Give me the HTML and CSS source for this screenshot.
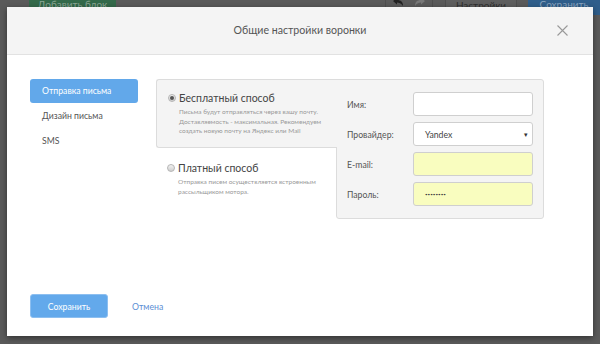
FILE: index.html
```html
<!doctype html>
<html lang="ru">
  <head>
    <meta charset="UTF-8" />
    <meta name="viewport" content="width=device-width, initial-scale=1.0" />
    <title>Общие настройки воронки</title>
    <link rel="stylesheet" href="styles.css">
  </head>
  <body>
    <div class="page-bar">
      <span class="bar-btn bar-add">Добавить блок</span>
      <span class="bar-spacer"></span>
      <span class="bar-history">
        <svg class="bar-undo" width="12" height="10" viewBox="0 0 12 10">
          <path d="M1 4 L5 1 L5 3 C9 3 11 5 11 9 C9 6 7 5.5 5 5.5 L5 7.5 Z" fill="#222" />
        </svg>
        <svg class="bar-redo" width="12" height="10" viewBox="0 0 12 10">
          <path d="M11 4 L7 1 L7 3 C3 3 1 5 1 9 C3 6 5 5.5 7 5.5 L7 7.5 Z" fill="#777" />
        </svg>
      </span>
      <span class="bar-btn bar-settings">Настройки</span>
      <span class="bar-btn bar-save">Сохранить</span>
    </div>

    <div class="modal">
      <div class="modal-header">
        <span></span>
        <h2 class="modal-title">Общие настройки воронки</h2>
        <span class="modal-close">
          <svg width="11" height="11" viewBox="0 0 11 11">
            <path d="M0.5 0.5 L10.5 10.5 M10.5 0.5 L0.5 10.5" stroke="#999" stroke-width="1.1" />
          </svg>
        </span>
      </div>

      <div class="modal-body">
        <ul class="side-nav">
          <li class="side-item active">Отправка письма</li>
          <li class="side-item">Дизайн письма</li>
          <li class="side-item">SMS</li>
        </ul>

        <div class="send-panel">
          <div class="send-options">
            <div class="send-option selected">
              <div class="option-title"><span class="radio checked"></span>Бесплатный способ</div>
              <p class="option-desc">Письма будут отправляться через вашу почту.<br>Доставляемость - максимальная. Рекомендуем<br>создать новую почту на Яндекс или Mail</p>
            </div>
            <div class="send-option">
              <div class="option-title"><span class="radio"></span>Платный способ</div>
              <p class="option-desc">Отправка писем осуществляется встроенным<br>рассыльщиком мотора.</p>
            </div>
          </div>

          <div class="mail-form">
            <label class="form-label">Имя:</label>
            <div class="form-input"></div>
            <label class="form-label">Провайдер:</label>
            <div class="form-input form-select"><span>Yandex</span><span class="select-arrow">▾</span></div>
            <label class="form-label">E-mail:</label>
            <div class="form-input filled"></div>
            <label class="form-label">Пароль:</label>
            <div class="form-input filled"><span class="password-dots">••••••••</span></div>
          </div>
        </div>
      </div>

      <div class="modal-footer">
        <button class="btn-save">Сохранить</button>
        <a class="link-cancel" href="#">Отмена</a>
      </div>
    </div>
  </body>
</html>
```

FILE: styles.css
```css
* {
  margin: 0;
  padding: 0;
  box-sizing: border-box;
  font-family: Lato, "Noto Sans", sans-serif;
}

body {
  background-color: #5a5a5a;
  width: 600px;
  height: 344px;
  overflow: hidden;
}

/* page underneath the overlay */
.page-bar {
  display: flex;
  height: 20px;
  margin-top: -5px;
  font-size: 10px;
  line-height: 18px;
}

.bar-btn {
  display: block;
  text-align: center;
  white-space: nowrap;
  overflow: hidden;
}

.bar-add {
  margin-left: 29px;
  width: 87px;
  background-color: #33694a;
  color: #8aa694;
}

.bar-spacer {
  flex: 1;
}

.bar-history {
  display: flex;
  align-items: center;
  justify-content: center;
  gap: 10px;
  width: 48px;
  border-left: 1px solid #4e4e4e;
  border-right: 1px solid #4e4e4e;
}

.bar-history svg {
  margin-top: -6px;
}

.bar-settings {
  width: 72px;
  margin-left: 12px;
  background-color: #5e5e5e;
  border: 1px solid #4f4f4f;
  color: #2e2e2e;
}

.bar-save {
  width: 72px;
  margin-left: 11px;
  background-color: #2f5e8b;
  color: #8aa4bf;
}

/* modal */
.modal {
  position: absolute;
  left: 7px;
  top: 7px;
  width: 586px;
  height: 329px;
  display: flex;
  flex-direction: column;
  background-color: white;
  box-shadow: 0 2px 6px rgba(0, 0, 0, 0.45);
}

.modal-header {
  display: grid;
  grid-template-columns: 1fr auto 1fr;
  align-items: center;
  height: 48px;
  background-color: #f4f4f4;
  border-bottom: 1px solid #e2e2e2;
}

.modal-title {
  font-size: 10.6px;
  font-weight: normal;
  color: #555;
  padding-bottom: 1px;
}

.modal-close {
  justify-self: end;
  display: flex;
  margin-right: 25px;
  margin-bottom: 1px;
}

.modal-body {
  flex: 1;
  display: flex;
  align-items: flex-start;
  padding: 24px 23px 0;
}

.side-nav {
  list-style: none;
  width: 108px;
  margin-right: 18px;
}

.side-item {
  height: 24px;
  margin-bottom: 1px;
  padding-left: 12px;
  line-height: 24px;
  font-size: 8.7px;
  color: #555;
  border-radius: 3px;
}

.side-item.active {
  background-color: #62a8ea;
  color: white;
}

.send-panel {
  display: flex;
}

.send-options {
  display: flex;
  flex-direction: column;
  width: 181px;
  margin-right: -1px;
  position: relative;
  z-index: 1;
}

.send-option {
  padding: 13px 8px 0 11px;
}

.send-option.selected {
  padding: 11px 8px 11px 11px;
  background-color: #f4f4f4;
  border: 1px solid #dcdcdc;
  border-right: none;
  border-radius: 3px 0 0 3px;
}

.option-title {
  display: flex;
  align-items: center;
  height: 14px;
  font-size: 10.5px;
  color: #444;
}

.radio {
  width: 8px;
  height: 8px;
  margin-right: 3px;
  border-radius: 50%;
  border: 1px solid #b5b5b5;
  background: linear-gradient(#f2f2f2, #cfcfcf);
  display: flex;
  align-items: center;
  justify-content: center;
}

.radio.checked::after {
  content: "";
  width: 4px;
  height: 4px;
  border-radius: 50%;
  background-color: #555;
}

.option-desc {
  margin-top: 2px;
  padding-left: 11px;
  font-size: 6.5px;
  line-height: 9.7px;
  color: #999;
  white-space: nowrap;
}

.mail-form {
  display: grid;
  grid-template-columns: 66px 120px;
  grid-auto-rows: 24px;
  row-gap: 6px;
  align-items: center;
  width: 208px;
  padding: 12px 10px 12px 10px;
  background-color: #f4f4f4;
  border: 1px solid #dcdcdc;
  border-radius: 0 3px 3px 3px;
}

.form-label {
  font-size: 8.7px;
  color: #555;
}

.form-input {
  height: 24px;
  display: flex;
  align-items: center;
  padding: 0 4px 0 11px;
  background-color: white;
  border: 1px solid #cfcfcf;
  border-radius: 3px;
  font-size: 8.7px;
  color: #444;
}

.form-select {
  justify-content: space-between;
}

.select-arrow {
  font-size: 7px;
  color: #333;
}

.form-input.filled {
  background-color: #f9fdbf;
}

.password-dots {
  font-size: 4.5px;
  color: #444;
}

.modal-footer {
  display: flex;
  align-items: center;
  padding: 0 23px 18px;
}

.btn-save {
  width: 78px;
  height: 24px;
  background-color: #63a9eb;
  border: 1px solid #8dbff0;
  border-radius: 3px;
  color: white;
  font-size: 8.7px;
  cursor: pointer;
}

.link-cancel {
  margin-left: 24px;
  font-size: 8.7px;
  color: #5b8ed4;
  text-decoration: none;
}
```
